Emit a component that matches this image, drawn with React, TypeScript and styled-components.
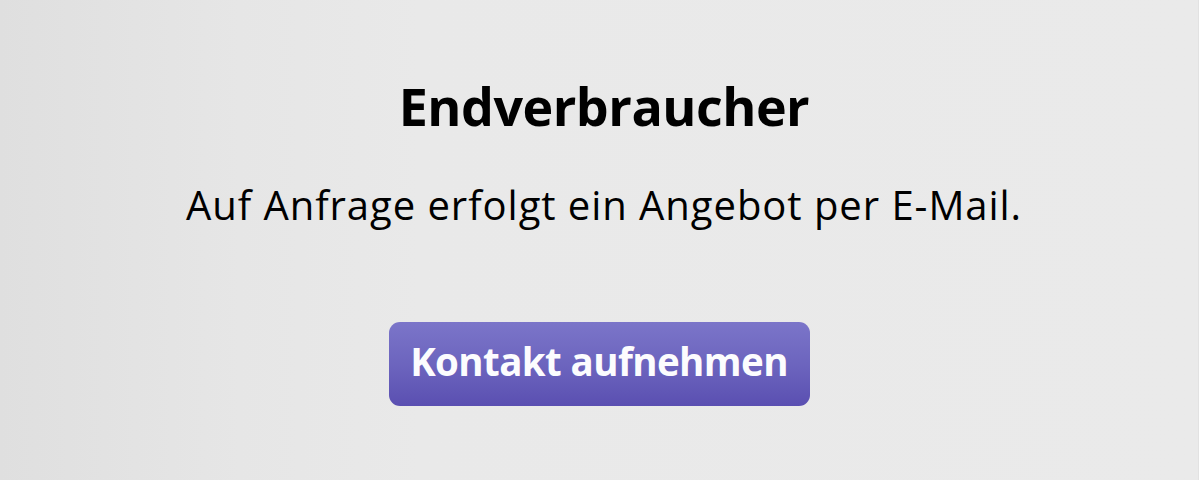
import React from "react";
import styled, { createGlobalStyle } from "styled-components";

const Global = createGlobalStyle`
  html, body { margin: 0; padding: 0; }
  body { font-family: "Open Sans", "Liberation Sans", sans-serif; }
`;

const Page = styled.main`
  width: 1199px;
  height: 480px;
  box-sizing: border-box;
  background: linear-gradient(to right, #dfdfdf 0%, #e6e6e6 20%, #e9e9e9 35%, #eaeaea 100%);
  border-right: 1px solid #e2e2e2;
  display: flex;
  flex-direction: column;
  align-items: center;
  padding-top: 74px;
`;

const Title = styled.h1`
  margin: 0;
  padding-left: 10px;
  font-size: 52px;
  line-height: 64px;
  font-weight: 700;
  color: #000;
  letter-spacing: -0.5px;
`;

const Lead = styled.p`
  margin: 41px 0 0;
  padding-left: 10px;
  font-size: 40px;
  line-height: 52px;
  font-weight: 400;
  color: #000;
  letter-spacing: 0.95px;
`;

const Button = styled.button`
  margin-top: 91px;
  width: 421px;
  height: 84px;
  box-sizing: border-box;
  border: none;
  border-radius: 11px;
  background: linear-gradient(to bottom, #7b75c9 0%, #6b63bd 55%, #5a4fb1 100%);
  color: #fcfcfe;
  font-family: inherit;
  font-size: 38.5px;
  font-weight: 700;
  letter-spacing: -0.6px;
  display: flex;
  align-items: center;
  justify-content: center;
  padding: 0 0 7px;
  cursor: pointer;
`;

export default function App() {
  return (
    <>
      <Global />
      <Page>
        <Title>Endverbraucher</Title>
        <Lead>Auf Anfrage erfolgt ein Angebot per E-Mail.</Lead>
        <Button>Kontakt aufnehmen</Button>
      </Page>
    </>
  );
}
